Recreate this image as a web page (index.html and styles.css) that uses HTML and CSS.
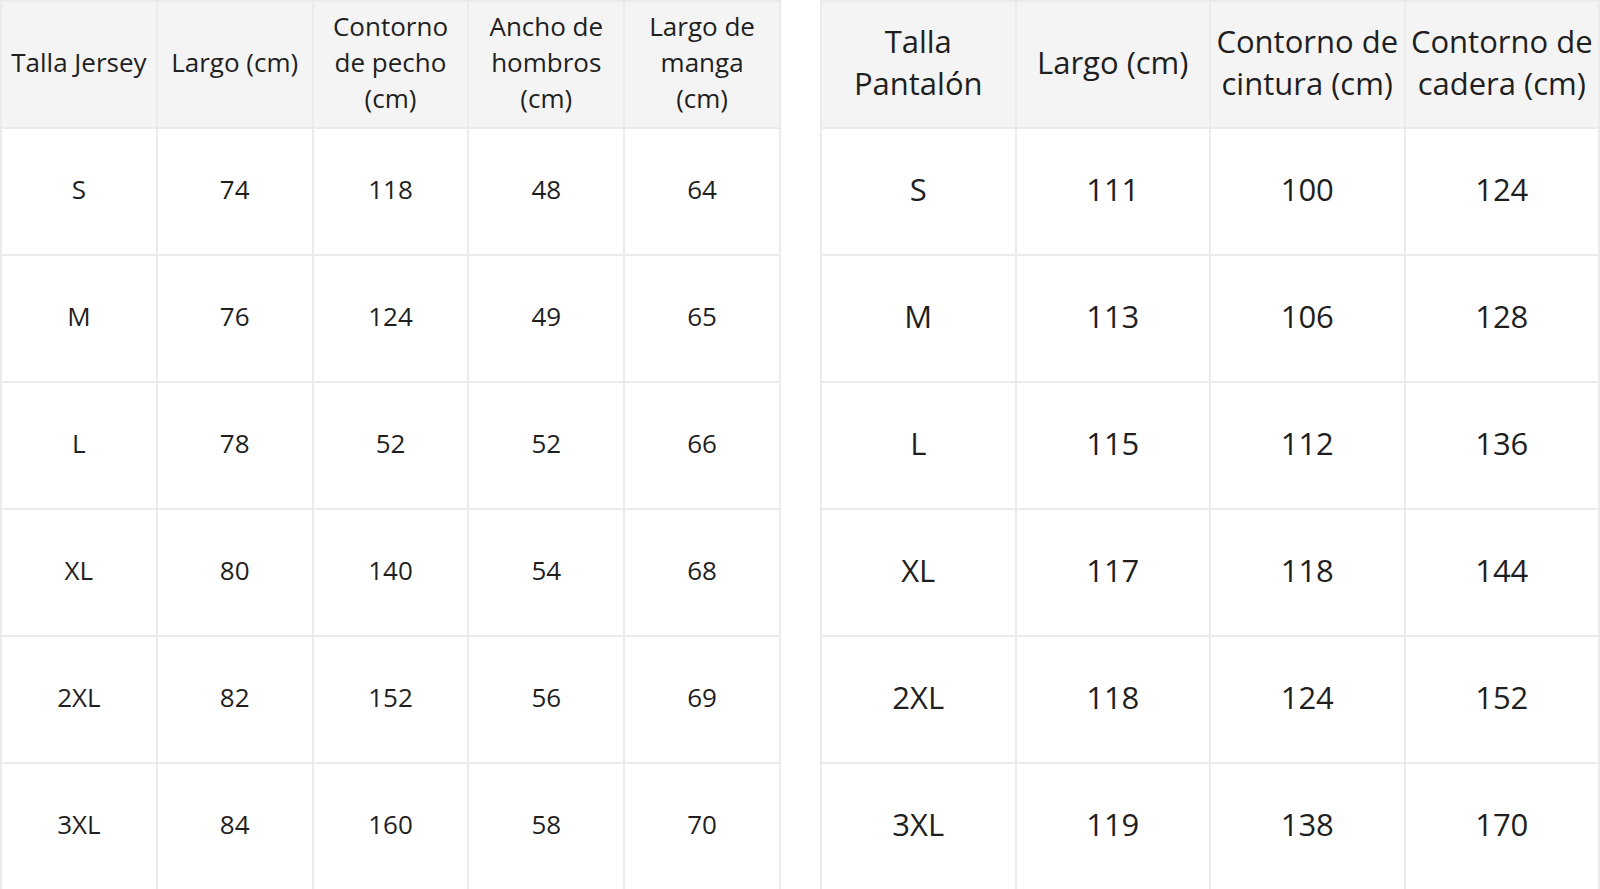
FILE: index.html
```html
<!DOCTYPE html>
<html lang="es">
<head>
<meta charset="utf-8">
<title>Tabla de tallas</title>
<link rel="stylesheet" href="styles.css">
</head>
<body>
<div class="wrap">
  <table class="size jersey">
    <thead>
      <tr>
        <th>Talla Jersey</th>
        <th>Largo (cm)</th>
        <th>Contorno de pecho (cm)</th>
        <th>Ancho de hombros (cm)</th>
        <th>Largo de manga (cm)</th>
      </tr>
    </thead>
    <tbody>
      <tr><td>S</td><td>74</td><td>118</td><td>48</td><td>64</td></tr>
      <tr><td>M</td><td>76</td><td>124</td><td>49</td><td>65</td></tr>
      <tr><td>L</td><td>78</td><td>52</td><td>52</td><td>66</td></tr>
      <tr><td>XL</td><td>80</td><td>140</td><td>54</td><td>68</td></tr>
      <tr><td>2XL</td><td>82</td><td>152</td><td>56</td><td>69</td></tr>
      <tr><td>3XL</td><td>84</td><td>160</td><td>58</td><td>70</td></tr>
    </tbody>
  </table>
  <table class="size pants">
    <thead>
      <tr>
        <th>Talla Pantalón</th>
        <th>Largo (cm)</th>
        <th>Contorno de cintura (cm)</th>
        <th>Contorno de cadera (cm)</th>
      </tr>
    </thead>
    <tbody>
      <tr><td>S</td><td>111</td><td>100</td><td>124</td></tr>
      <tr><td>M</td><td>113</td><td>106</td><td>128</td></tr>
      <tr><td>L</td><td>115</td><td>112</td><td>136</td></tr>
      <tr><td>XL</td><td>117</td><td>118</td><td>144</td></tr>
      <tr><td>2XL</td><td>118</td><td>124</td><td>152</td></tr>
      <tr><td>3XL</td><td>119</td><td>138</td><td>170</td></tr>
    </tbody>
  </table>
</div>
</body>
</html>
```

FILE: styles.css
```css
html, body {
  margin: 0;
  padding: 0;
  background: #ffffff;
}
body {
  font-family: "Open Sans", "Noto Sans", sans-serif;
  color: #1f1f1f;
}
.wrap {
  display: flex;
  gap: 39px;
  width: 1600px;
  height: 889px;
  overflow: hidden;
}
.size {
  flex: none;
  border-collapse: collapse;
  table-layout: fixed;
  height: 889px;
}
.size th,
.size td {
  border: 2px solid #ebebeb;
  text-align: center;
  vertical-align: middle;
  font-weight: 400;
  height: 119px;
  overflow-wrap: normal;
}
.size th {
  background: #f4f4f4;
}
.jersey {
  width: 781px;
  font-size: 26px;
  line-height: 36px;
}
.jersey th,
.jersey td {
  padding: 0 8px 6px;
}
.pants {
  width: 780px;
  font-size: 31px;
  line-height: 42px;
}
.pants th,
.pants td {
  padding: 0 3px 6px;
}
```
